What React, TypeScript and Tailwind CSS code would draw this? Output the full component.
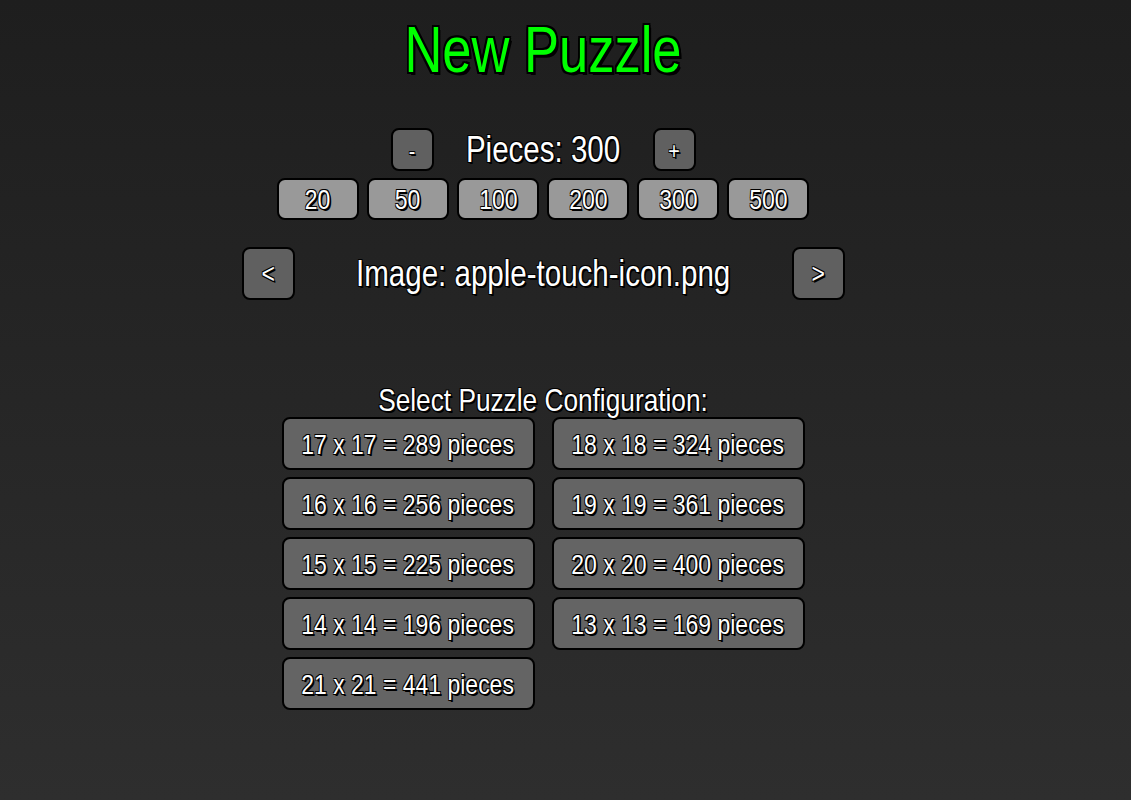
import React from "react";

const PRESETS = [20, 50, 100, 200, 300, 500];

// listed row by row, as the grid flows
const CONFIGS = [
  "17 x 17 = 289 pieces",
  "18 x 18 = 324 pieces",
  "16 x 16 = 256 pieces",
  "19 x 19 = 361 pieces",
  "15 x 15 = 225 pieces",
  "20 x 20 = 400 pieces",
  "14 x 14 = 196 pieces",
  "13 x 13 = 169 pieces",
  "21 x 21 = 441 pieces",
];

const shadow = "[text-shadow:2px_2px_0_#000,1px_1px_0_#000,-1px_-1px_0_#000,1px_-1px_0_#000,-1px_1px_0_#000]";

// no narrow face installed: squeeze Liberation Sans to Arial Narrow widths
function Narrow({ children }: { children: React.ReactNode }) {
  return <span className="inline-block scale-x-[0.82] whitespace-nowrap">{children}</span>;
}

export default function App() {
  return (
    <div className="min-h-[800px] w-full bg-[linear-gradient(180deg,#1e1e1e_0%,#2e2e2e_100%)] font-['Liberation_Sans',Arial,sans-serif] text-white">
      <div className="flex w-[1086px] flex-col items-center">
        {/* Title */}
        <h1 className="mt-[18px] text-[64px] leading-none text-[#00ff00] [text-shadow:3px_3px_0_#000,2px_2px_0_#000,-2px_-2px_0_#000,2px_-2px_0_#000,-2px_2px_0_#000,0_2px_0_#000,2px_0_0_#000,0_-2px_0_#000,-2px_0_0_#000]">
          <Narrow>New Puzzle</Narrow>
        </h1>

        {/* Pieces counter */}
        <div className="mt-[46px] flex items-center gap-[32px]">
          <SquareBtn size="small">-</SquareBtn>
          <span className={`flex w-[155px] justify-center text-[36px] leading-none ${shadow}`}>
            <Narrow>Pieces: 300</Narrow>
          </span>
          <SquareBtn size="small">+</SquareBtn>
        </div>

        {/* Presets */}
        <div className="mt-[7px] flex gap-[8px]">
          {PRESETS.map((p) => (
            <button
              key={p}
              className={`flex h-[42px] w-[82px] items-center justify-center rounded-[8px] border-2 border-black bg-[#999999] pt-[2px] text-[28px] leading-none text-white ${shadow}`}
            >
              <Narrow>{p}</Narrow>
            </button>
          ))}
        </div>

        {/* Image selector */}
        <div className="mt-[27px] flex items-center gap-[65px]">
          <SquareBtn size="large">&lt;</SquareBtn>
          <span className={`flex w-[367px] justify-center text-[36px] leading-none ${shadow}`}>
            <Narrow>Image: apple-touch-icon.png</Narrow>
          </span>
          <SquareBtn size="large">&gt;</SquareBtn>
        </div>

        {/* Configurations */}
        <div className={`mt-[83px] text-[32px] leading-[34px] ${shadow}`}>
          <Narrow>Select Puzzle Configuration:</Narrow>
        </div>
        <div className="grid grid-cols-[253px_253px] gap-x-[17px] gap-y-[7px]">
          {CONFIGS.map((c) => (
            <button
              key={c}
              className={`flex h-[53px] items-center justify-center rounded-[8px] border-2 border-black bg-[#646464] pt-[3px] text-[28px] leading-none text-white ${shadow}`}
            >
              <Narrow>{c}</Narrow>
            </button>
          ))}
        </div>
      </div>
    </div>
  );
}

function SquareBtn({ size, children }: { size: "small" | "large"; children: React.ReactNode }) {
  return (
    <button
      className={
        size === "small"
          ? `flex h-[43px] w-[43px] items-center justify-center rounded-[8px] border-2 border-black bg-[#606060] pt-[2px] text-[24px] leading-none text-white ${shadow}`
          : `flex h-[53px] w-[53px] items-center justify-center rounded-[8px] border-2 border-black bg-[#606060] text-[28px] leading-none text-white ${shadow}`
      }
    >
      <Narrow>{children}</Narrow>
    </button>
  );
}
